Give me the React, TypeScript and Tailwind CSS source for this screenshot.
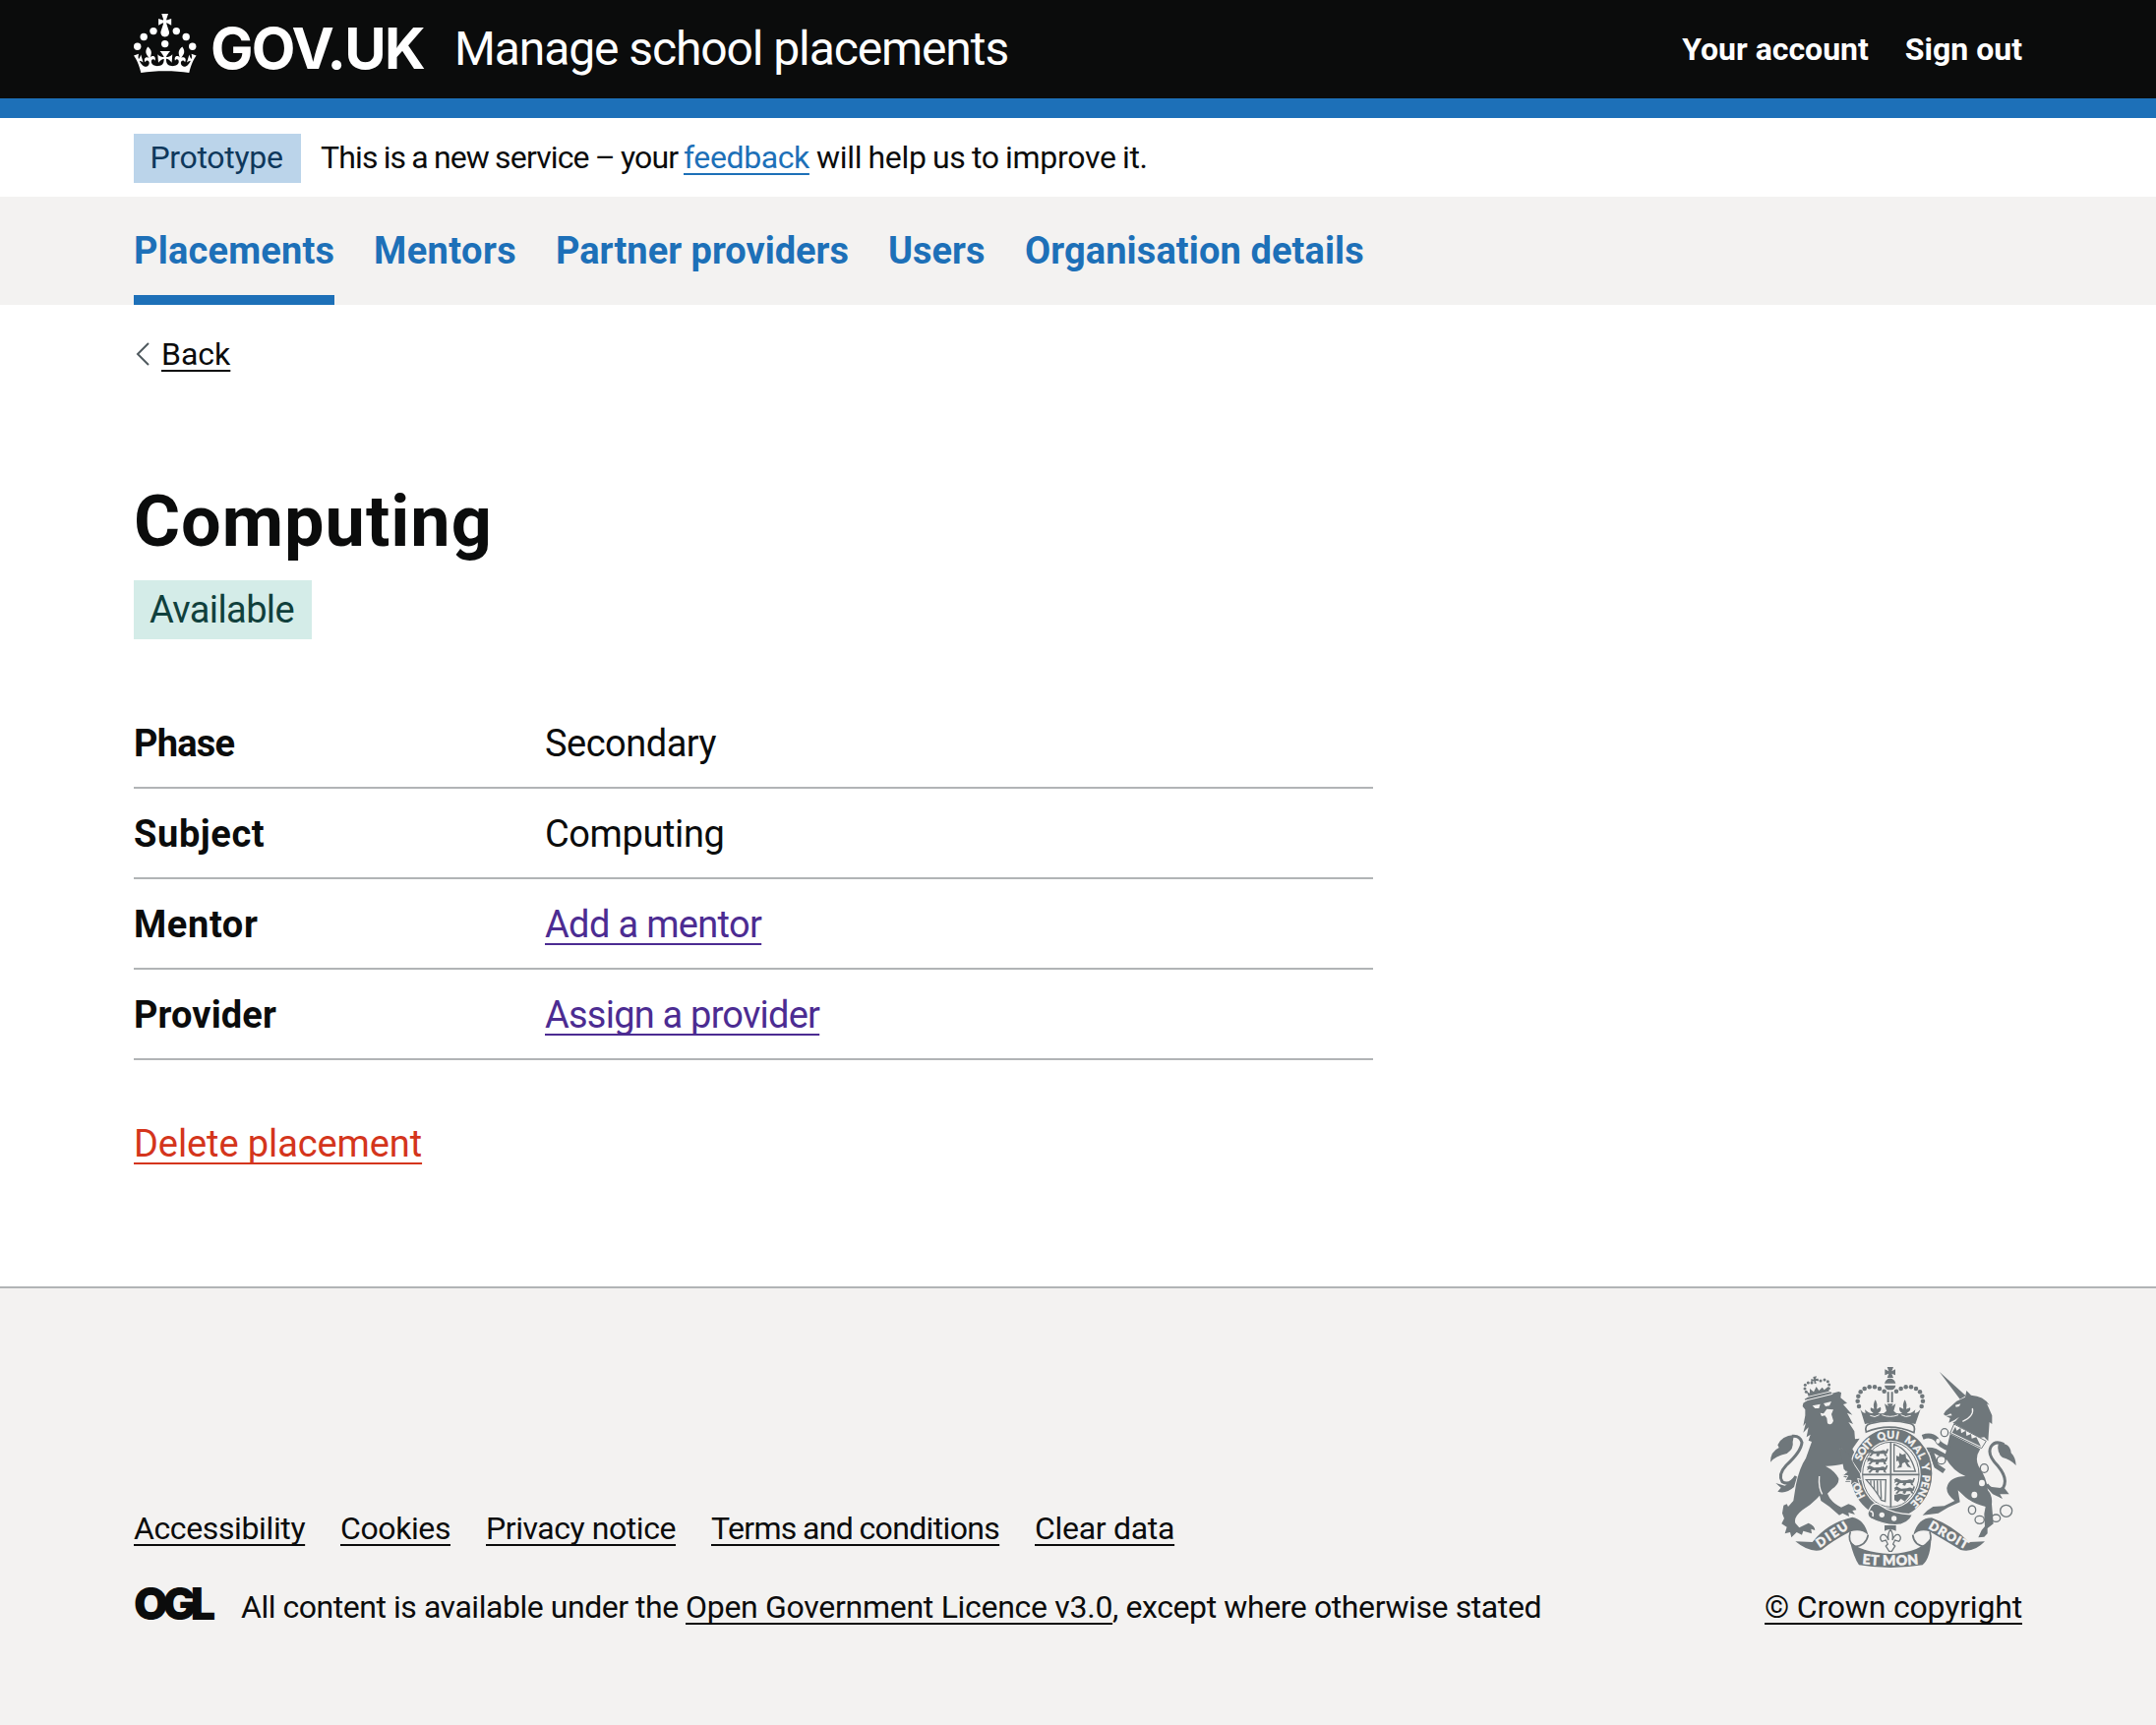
const PAPER = "#f3f2f1";
const STONE = "#6f777b";

function Crown() {
  return (
    <svg viewBox="0 0 64 60" className="h-[60px] w-16 shrink-0" fill="#fff" aria-hidden="true">
      <circle cx="20" cy="17.6" r="3.7" />
      <circle cx="10.2" cy="23.5" r="3.7" />
      <circle cx="3.7" cy="33.2" r="3.7" />
      <circle cx="31.7" cy="30.6" r="3.7" />
      <circle cx="43.3" cy="17.6" r="3.7" />
      <circle cx="53.2" cy="23.5" r="3.7" />
      <circle cx="59.7" cy="33.2" r="3.7" />
      <path d="M33.1,9.8c.2-.1.3-.3.5-.5l4.6,2.4v-6.8l-4.6,1.5c-.1-.2-.3-.3-.5-.5l1.9-5.9h-6.7l1.9,5.9c-.2.1-.3.3-.5.5l-4.6-1.5v6.8l4.6-2.4c.1.2.3.3.5.5l-2.6,8c-.9,2.8,1.2,5.7,4.1,5.7h0c3,0,5.1-2.9,4.1-5.7l-2.6-8ZM37,37.9s-3.4,3.8-4.1,6.1c2.2,0,4.2-.5,6.4-2.8l-.7,8.5c-2-2.8-4.4-4.1-5.7-3.8.1,3.1.5,6.7,5.8,7.2,3.7.3,6.7-1.5,7-3.8.4-2.6-2-4.3-3.7-1.6-1.4-4.5,2.4-6.1,4.9-3.2-1.9-4.5-1.8-7.7,2.4-10.9,3,4,2.6,7.3-1.2,11.1,2.4-1.3,6.2,0,4,4.6-1.2-2.8-3.7-2.2-4.2.2-.3,1.7.7,3.7,3,4.2,1.9.3,4.7-.9,7-5.9-1.3,0-2.4.7-3.9,1.7l2.4-8c.6,2.3,1.4,3.7,2.2,4.5.6-1.6.5-2.8,0-5.3l5,1.8c-2.6,3.6-5.2,8.7-7.3,17.5-7.4-1.1-15.7-1.7-24.5-1.7h0c-8.8,0-17.1.6-24.5,1.7-2.1-8.9-4.7-13.9-7.3-17.5l5-1.8c-.5,2.5-.6,3.7,0,5.3.8-.8,1.6-2.3,2.2-4.5l2.4,8c-1.5-1-2.6-1.7-3.9-1.7,2.3,5,5.2,6.2,7,5.9,2.3-.4,3.3-2.4,3-4.2-.5-2.4-3-3.1-4.2-.2-2.2-4.6,1.6-6,4-4.6-3.7-3.7-4.2-7.1-1.2-11.1,4.2,3.2,4.3,6.4,2.4,10.9,2.5-2.8,6.3-1.3,4.9,3.2-1.8-2.7-4.1-1-3.7,1.6.3,2.3,3.3,4.1,7,3.8,5.4-.5,5.7-4.2,5.8-7.2-1.3-.2-3.7,1-5.7,3.8l-.7-8.5c2.2,2.3,4.2,2.7,6.4,2.8-.7-2.3-4.1-6.1-4.1-6.1h10.6,0Z" />
    </svg>
  );
}

const LEFT_PEARLS = [[407, 134], [393, 126], [378, 121], [362, 121], [347, 126], [335, 136], [328, 149], [326, 164], [330, 180]];
const LION_PEARLS = [[121, 88], [117, 78], [118, 67], [127, 60], [138, 60], [165, 54], [177, 51], [187, 56], [191, 66], [190, 77]];
const GARTER = [
  { word: "HO", start: 92, length: 46 },
  { word: "SOIT", start: 204, length: 66 },
  { word: "QUI", start: 286, length: 62 },
  { word: "MAL", start: 366, length: 76 },
  { word: "Y", start: 456, length: 20 },
  { word: "PENSE", start: 488, length: 98 },
];

function WalkingLion({ x, y }: { x: number; y: number }) {
  return (
    <g transform={`translate(${x} ${y})`} fill={STONE}>
      <path d="M0 2L8-3L16 1L22 4L40 3Q50-2 56 4L60-4L64-2L60 10L56 12L60 20L52 18L50 12L38 12L34 20L26 18L28 12L18 12L10 20L4 18L12 10L8 8L0 12L3 6Z" />
    </g>
  );
}

function RoyalArms() {
  return (
    <svg viewBox="60 57 750 618" className="mr-[6px] h-[206px] w-[250px]" fill={STONE} aria-hidden="true">
      <defs>
        <path id="garter" d="M427 498A97 110 0 0 1 427 278A97 110 0 0 1 427 498" />
        <path id="scroll" d="M338 660Q426 670 516 660" />
      </defs>

      {/* lion */}
      <g transform="translate(48 48)">
        <path d="M128 112L220 87L228 90L226 106L246 122L234 126L262 158L246 152L264 186L250 180L268 208L270 232L284 230L262 262Q280 290 288 318L290 348L284 356L288 372L272 366L258 376L260 362L240 362L248 352L234 346L246 336L236 320L250 328L240 306Q205 315 180 314Q210 330 220 352Q222 370 200 384L186 398Q196 425 228 440L250 430Q272 436 274 448L262 450L270 462L250 456L252 468L232 458L222 464L192 438L166 420L162 404Q140 430 110 448Q82 470 88 488L100 502L128 488Q148 496 148 510L136 506L138 520L112 512L108 524L92 516L76 532L72 516L56 520L62 500L46 490L54 474L48 458L52 434L62 430L66 438L82 420L90 370Q100 320 120 290L138 240L128 236L134 218L122 226L128 196L112 212L120 182L112 192L118 160L118 142L110 132L112 122Z" />
        <path d="M161 345Q158 380 170 400M225 260L262 300" fill="none" stroke={PAPER} strokeWidth="4" />
        <path d="M140 130L164 125L160 138H148ZM174 123L198 117L192 130L180 132ZM164 152L174 154L184 140L204 142L198 156L204 176Q198 192 186 184L184 168L178 160L168 162Z" fill={PAPER} />
        <path d="M90 345Q70 376 48 362Q34 340 60 312Q106 270 108 242Q102 220 78 223" fill="none" stroke={STONE} strokeWidth="9" />
        <path d="M84 219Q45 222 34 250L38 258Q12 270 12 302Q26 284 62 276Q84 262 80 240ZM28 366L44 380L34 392Q60 400 84 378L92 350L56 374Z" />
        {LION_PEARLS.map(([x, y]) => <circle key={`${x}-${y}`} cx={x} cy={y} r="4.5" />)}
        <path d="M142 42L153 40L150 48L158 47L159 55L150 54L152 62L146 63L145 55L136 57L136 48L144 50ZM122 86L132 92L132 78L144 88L152 72L160 84L170 74L176 82L188 72L191 86L128 101ZM116 110L126 104L196 88L200 93L120 114Z" />
        <path d="M120 114L202 94" fill="none" stroke={PAPER} strokeWidth="3" />
      </g>

      {/* unicorn */}
      <g transform="translate(420 48)">
        <path d="M155 26L218 110L236 100Z" />
        <path d="M238 84L252 98Q290 100 308 128L300 124L316 160L316 186L308 180L304 238L292 226L278 228L196 182Q205 178 216 164Q200 176 184 182L188 168L176 162L168 156L174 146L208 116L234 104Z" />
        <path d="M204 128L220 124L216 132L206 134ZM172 162L190 154L194 160Z" fill={PAPER} />
        <path d="M256 138Q262 162 226 178" fill="none" stroke={PAPER} strokeWidth="4" />
        <path d="M200 186L298 238L284 260L188 214Z" fill={PAPER} stroke={STONE} strokeWidth="3" />
        <path d="M194 212L204 194L208 206L220 198L222 214L236 206L238 222L252 216L254 230L268 226L282 254Z" />
        <path d="M188 216L280 262Q262 290 275 315Q300 350 303 388Q318 405 315 430L320 490L302 504L302 520L292 530L274 532L284 510L294 498L292 460L296 438Q262 430 236 410L212 388L218 424L182 440L152 458L104 464L118 450L136 438L170 436L202 420Q176 400 178 380Q186 345 235 345Q196 330 172 285Z" />
        <path d="M188 262Q156 252 146 232Q130 216 104 226M182 290L142 268Q124 262 100 268M130 272L146 314L170 330" fill="none" stroke={STONE} strokeWidth="15" />
        <path d="M300 370Q326 402 350 380Q366 352 334 314Q300 280 312 256Q325 234 352 248" fill="none" stroke={STONE} strokeWidth="9" />
        <path d="M336 244Q372 244 374 274Q388 288 389 312Q372 294 348 288Q328 272 336 244ZM296 376L318 400L348 414L340 400L368 400L354 382Z" />
        <g fill="none" stroke={STONE} strokeWidth="4">
          <ellipse cx="171" cy="212" rx="11" ry="12" />
          <ellipse cx="292" cy="321" rx="12" ry="13" fill={PAPER} />
          <ellipse cx="161" cy="296" rx="13" ry="12" fill={PAPER} />
          <ellipse cx="255" cy="448" rx="11" ry="13" />
          <ellipse cx="278" cy="478" rx="14" ry="12" />
          <ellipse cx="328" cy="473" rx="13" ry="11" />
          <circle cx="359" cy="451" r="18" />
        </g>
        <ellipse cx="151" cy="238" rx="6" ry="8" fill={PAPER} />
        <ellipse cx="285" cy="366" rx="9" ry="10" fill={PAPER} />
        <ellipse cx="262" cy="402" rx="9" ry="10" fill={PAPER} />
      </g>

      {/* garter and shield */}
      <ellipse cx="429" cy="384" rx="126" ry="138" stroke={PAPER} strokeWidth="4" />
      <ellipse cx="427" cy="388" rx="91" ry="104" fill={PAPER} />
      <ellipse cx="427" cy="388" rx="86" ry="99" fill="none" stroke={STONE} strokeWidth="3" />
      <path d="M340 388H514M427 288V490" stroke={STONE} strokeWidth="5" />
      <WalkingLion x={356} y={313} />
      <WalkingLion x={354} y={338} />
      <WalkingLion x={354} y={363} />
      <WalkingLion x={437} y={402} />
      <WalkingLion x={437} y={427} />
      <path d="M438 450L456 446L472 450L488 446L480 458L470 470L458 462L448 472L438 466Z" />
      <path d="M437 296Q484 312 502 378H437Z" fill="none" stroke={STONE} strokeWidth="4" />
      <path d="M444 330L452 334L454 322L462 328L472 324L474 338L486 348L478 352L490 368L478 364L470 350L462 354L460 366L446 368L454 358L450 346L444 348Z" />
      <path d="M352 404H412L410 470L398 466Q384 440 352 404Z" fill="none" stroke={STONE} strokeWidth="4" />
      <path d="M366 406L366 420M376 406L377 434M386 406L387 448M396 406L398 462" stroke={STONE} strokeWidth="4" />
      <g fill={PAPER} stroke={PAPER} strokeWidth="1" fontSize="32" className="font-[Lato] font-black">
        {GARTER.map((g) => (
          <text key={g.word}><textPath href="#garter" startOffset={g.start} textLength={g.length}>{g.word}</textPath></text>
        ))}
      </g>
      <path d="M276 308L310 348L334 384L338 404L326 400L332 418L316 412L304 422L306 406L288 406L296 392L280 390L294 380Z" stroke={PAPER} strokeWidth="3" />
      <path d="M270 300L300 326L316 360L304 384L284 372Z" />
      <path d="M362 494Q372 470 392 480Q430 508 494 510Q480 542 440 542Q400 540 366 522Q350 512 362 494Z" stroke={PAPER} strokeWidth="4" />
      <circle cx="400" cy="511" r="8" fill={PAPER} />
      <circle cx="437" cy="522" r="8" fill={PAPER} />
      <path d="M364 500Q376 500 372 516" fill="none" stroke={PAPER} strokeWidth="5" />

      {/* imperial crown */}
      <path d="M352 258Q346 236 366 232Q425 218 486 232Q504 236 498 260Q425 228 352 258Z" fill={PAPER} stroke={STONE} strokeWidth="5" />
      {LEFT_PEARLS.flatMap(([x, y]) => [<circle key={`l${x}`} cx={x} cy={y} r="6.8" />, <circle key={`r${x}`} cx={851 - x} cy={y} r="6.8" />])}
      <path d="M416 60H435L430 73L441 67V85L430 80L435 93H416L421 80L409 85V67L421 73ZM408 110Q412 95 425 95Q438 95 442 110ZM408 116H442Q440 130 425 130Q410 130 408 116ZM416 136H422V168H416ZM428 136H434V168H428Z" />
      <path d="M348 234L334 188Q342 202 350 200L348 190Q362 204 374 200Q362 194 366 184L376 188Q372 172 380 160Q388 172 384 188L396 182Q400 194 388 200Q404 206 414 194L408 172L420 180L416 172H434L430 180L442 172L436 194Q446 206 462 200Q450 194 454 182L466 188Q462 172 470 160Q478 172 474 188L486 184Q490 194 476 200Q490 204 502 190L500 200Q508 202 518 188L502 234Q425 214 348 234Z" />
      <path d="M364 208Q378 216 392 206M400 206Q425 216 450 206M458 206Q472 216 488 208" fill="none" stroke={PAPER} strokeWidth="3" />

      {/* fleur-de-lis */}
      <path d="M408 543H443V560Q425 550 408 560Z" />
      <path d="M426 556Q436 568 432 588Q440 568 452 572Q462 580 452 592L440 588L434 600L440 606L430 622H422L412 606L418 600L412 588L400 592Q390 580 400 572Q412 568 420 588Q416 568 426 556Z" fill={PAPER} stroke={STONE} strokeWidth="4" />

      {/* motto scroll */}
      <path d="M136 592L188 594Q232 536 310 518Q346 524 358 572Q336 552 304 562Q250 590 216 618Q180 628 136 592Z" />
      <path d="M714 592L666 594Q616 544 552 520Q510 520 496 572Q516 552 546 562Q600 594 640 618Q680 628 714 592Z" />
      <path d="M304 562Q294 592 316 608Q352 606 358 572M546 562Q556 592 534 608Q498 606 494 572" fill="none" stroke={STONE} strokeWidth="5" />
      <path d="M302 590Q330 624 426 630Q524 624 550 578Q550 640 524 664Q426 680 330 664Q314 640 302 590Z" />
      <g fill={PAPER} stroke={PAPER} strokeWidth="1.5" className="font-[Lato] font-black" fontSize="38">
        <text transform="translate(210 612) rotate(-34)" textLength="108">DIEU</text>
        <text transform="translate(540 551) rotate(30)" textLength="132">DROIT</text>
        <text fontSize="42"><textPath href="#scroll" startOffset="2" textLength="172">ET MON</textPath></text>
      </g>
    </svg>
  );
}

const NAV = [
  { label: "Placements", cls: "w-[204px] tracking-[0.2px]" },
  { label: "Mentors", cls: "w-[145px] tracking-[0.4px]" },
  { label: "Partner providers", cls: "w-[298px]" },
  { label: "Users", cls: "w-[99px]" },
  { label: "Organisation details", cls: "w-[345px] tracking-[0.1px]" },
];

const ROWS = [
  { key: "Phase", keyCls: "tracking-[-0.8px]", value: "Secondary", cls: "tracking-[-0.5px]" },
  { key: "Subject", keyCls: "tracking-[0.6px]", value: "Computing", cls: "tracking-[-0.4px]" },
  { key: "Mentor", keyCls: "tracking-[0.6px]", value: "Add a mentor", cls: "tracking-[-0.67px]", link: true },
  { key: "Provider", keyCls: "tracking-[0.1px]", value: "Assign a provider", cls: "tracking-[-0.78px]", link: true },
];

const FOOTER = [
  { label: "Accessibility", cls: "w-[174px] tracking-[-0.38px]" },
  { label: "Cookies", cls: "w-[112px] tracking-[-0.4px]" },
  { label: "Privacy notice", cls: "w-[193px] tracking-[-0.44px]" },
  { label: "Terms and conditions", cls: "w-[293px] tracking-[-0.65px] [word-spacing:-1px]" },
  { label: "Clear data", cls: "w-[142px] tracking-[-0.3px]" },
];

export default function App() {
  return (
    <div className="flex min-h-[1754px] flex-col bg-white font-[Roboto,sans-serif] text-[32px] leading-[50px] text-[#0b0c0c]">
      <header className="flex h-[120px] items-center border-b-[20px] border-[#1d70b8] bg-[#0b0c0c] px-[136px] text-white">
        <div className="-mt-3 flex"><Crown /></div>
        <span className="-mt-[2px] ml-[14px] w-[248px] font-[Inter,sans-serif] text-[58px] font-bold tracking-[-1.7px]">GOV.UK</span>
        <span className="text-[48px] tracking-[-1.1px]">Manage school placements</span>
        <nav className="ml-auto flex gap-[37px] font-bold">
          <a>Your account</a>
          <a>Sign out</a>
        </nav>
      </header>

      <div className="flex h-20 items-center px-[136px]">
        <strong className="mt-[2px] mr-5 flex h-[50px] w-[170px] items-center justify-center bg-[#bbd4ea] pr-[2px] pb-[2px] font-normal tracking-[-0.3px] text-[#0f385c]">Prototype</strong>
        <p className="flex whitespace-pre">
          <span className="w-[369px] tracking-[-0.86px] [word-spacing:-1px]">This is a new service – your</span>
          <a className="w-[135px] tracking-[-0.4px] text-[#1d70b8] underline decoration-2 underline-offset-[5px] [text-decoration-skip-ink:none]">feedback</a>
          <span className="tracking-[-0.3px] [word-spacing:-1.3px]">will help us to improve it.</span>
        </p>
      </div>

      <nav className="flex h-[110px] gap-10 bg-[#f3f2f1] px-[136px] text-[38px] font-bold text-[#1d70b8]">
        {NAV.map((n, i) => (
          <a key={n.label} className={`flex items-center whitespace-nowrap ${i === 0 ? "border-b-[10px] border-[#1d70b8] pt-[10px]" : ""} ${n.cls}`}>{n.label}</a>
        ))}
      </nav>

      <main className="flex flex-col items-start px-[136px]">
        <a className="mt-[25px] flex items-center">
          <svg viewBox="0 0 14 24" className="ml-[2px] mr-3 h-6 w-[14px]" fill="none" stroke="#505a5f" strokeWidth="2"><path d="M13 1L2 12L13 23" /></svg>
          <span className="underline decoration-2 underline-offset-[5px]">Back</span>
        </a>
        <h1 className="mt-[106px] text-[72px] font-bold leading-[80px] tracking-[1px]">Computing</h1>
        <strong className="mt-[19px] flex h-[60px] w-[181px] items-center justify-center bg-[#d4ece8] pr-[2px] pb-px text-[38px] font-normal tracking-[-0.6px] text-[#10403c]">Available</strong>
        <dl className="mt-[60px] w-[1260px] text-[38px]">
          {ROWS.map((r) => (
            <div key={r.key} className="flex h-[92px] items-center border-b-2 border-[#b1b4b6] pt-px">
              <dt className={`w-[418px] font-bold ${r.keyCls}`}>{r.key}</dt>
              <dd className={r.cls}>
                {r.link ? <a className="text-[#4c2c92] underline decoration-2 underline-offset-[6px] [text-decoration-skip-ink:none]">{r.value}</a> : r.value}
              </dd>
            </div>
          ))}
        </dl>
        <a className="mt-[60px] text-[38px] tracking-[-0.1px] text-[#d4351c] underline decoration-2 underline-offset-[6px] [text-decoration-skip-ink:none]">Delete placement</a>
      </main>

      <footer className="mt-[120px] flex flex-1 items-start justify-between border-t-2 border-[#b1b4b6] bg-[#f3f2f1] px-[136px] pt-[79px]">
        <div className="mt-[140px]">
          <ul className="flex gap-9 whitespace-nowrap">
            {FOOTER.map((f) => (
              <li key={f.label} className={f.cls}><a className="underline decoration-2 underline-offset-[5px] [text-decoration-skip-ink:none]">{f.label}</a></li>
            ))}
          </ul>
          <div className="mt-[30px] flex items-center">
            <span className="-mt-[6px] w-[109px] font-[Inter,sans-serif] text-[45px] font-black tracking-[-5.5px]">OGL</span>
            <p className="flex whitespace-nowrap tracking-[-0.4px]">
              <span className="w-[452px] tracking-[-0.46px]">All content is available under the</span>
              <a className="w-[434px] tracking-[-0.29px] underline decoration-2 underline-offset-[5px] [text-decoration-skip-ink:none]">Open Government Licence v3.0</a>
              <span>, except where otherwise stated</span>
            </p>
          </div>
        </div>
        <div className="flex flex-col items-end">
          <RoyalArms />
          <a className="mt-[14px] tracking-[-0.18px] underline decoration-2 underline-offset-[5px] [text-decoration-skip-ink:none]">© Crown copyright</a>
        </div>
      </footer>
    </div>
  );
}
